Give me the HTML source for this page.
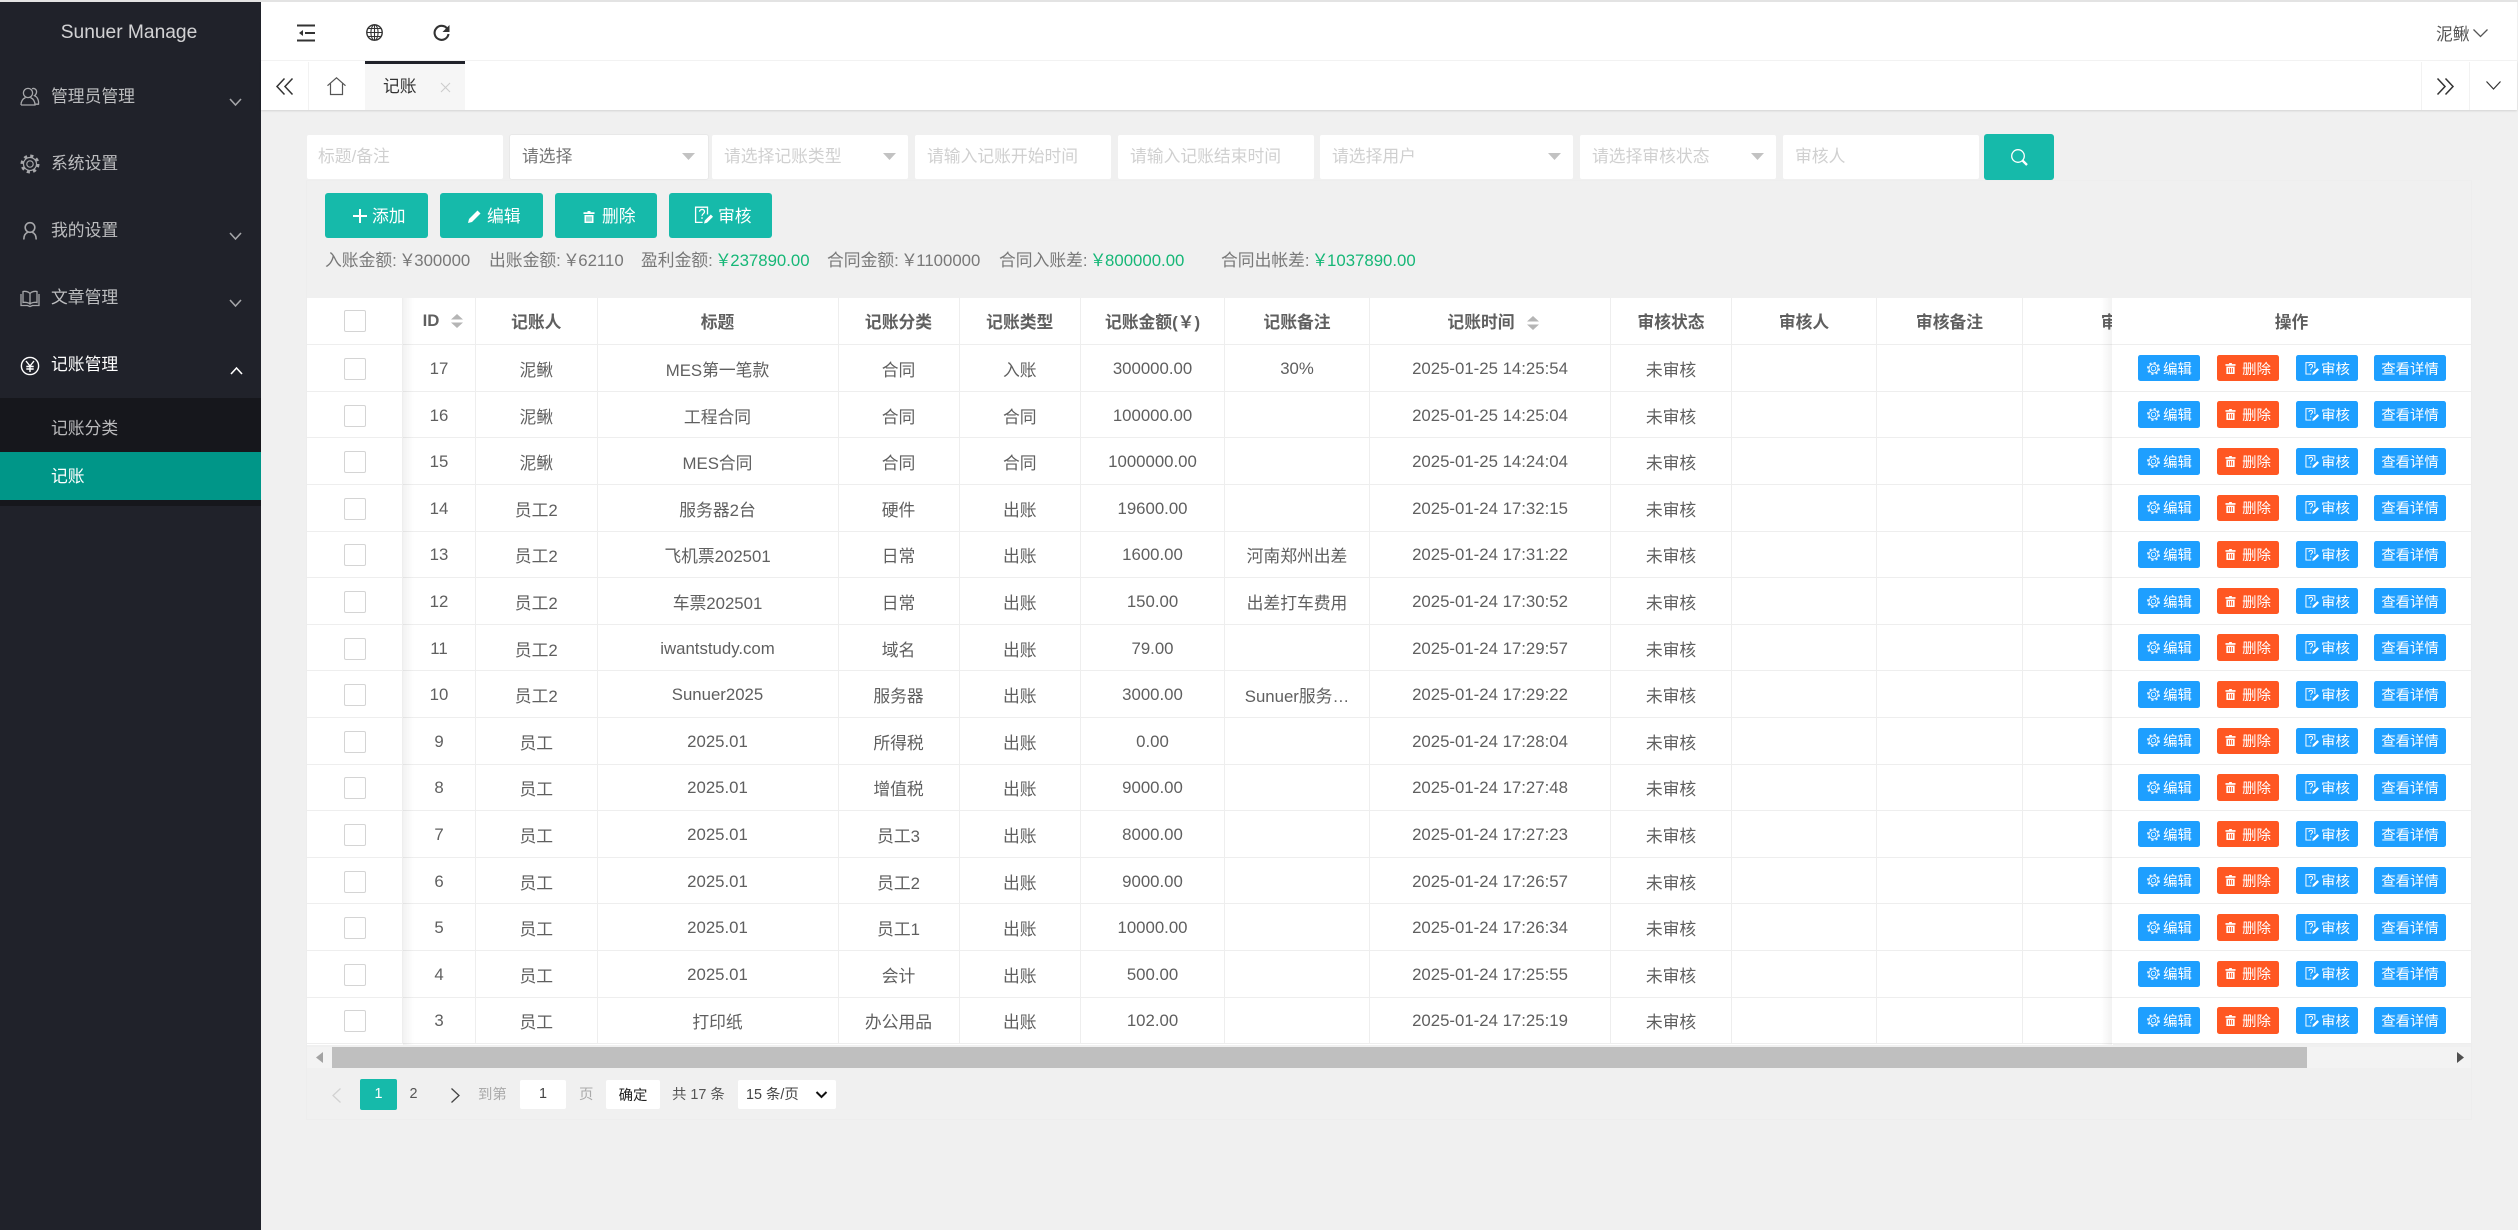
<!DOCTYPE html>
<html lang="zh-CN">
<head>
<meta charset="utf-8">
<title>Sunuer Manage</title>
<style>
*{box-sizing:border-box;margin:0;padding:0}
html,body{width:2518px;height:1230px;overflow:hidden;background:#f0f0f0;font-family:"Liberation Sans","Noto Sans CJK SC",sans-serif;font-size:16.8px;color:#5f5f5f}
.a{position:absolute}
svg{display:block;overflow:visible}
#top{left:0;top:0;width:2518px;height:2px;background:#e3e3e3}
#side{left:0;top:2px;width:261px;height:1228px;background:#20222a;color:rgba(255,255,255,.7)}
#logo{left:0;top:0;width:258px;height:59px;line-height:61px;text-align:center;font-size:19.2px;color:rgba(255,255,255,.8)}
.nav{left:51px;line-height:24px;height:24px;white-space:nowrap;margin-top:1.5px}
.nic{left:20px;width:20px;height:20px;fill:none;stroke:#a6a7aa;stroke-width:1.3}
.car{left:229px;width:13px;height:8px;fill:none;stroke:#a5a6a9;stroke-width:1.6}
#sub{left:0;top:396px;width:261px;height:108px;background:#16171c}
#cur{left:0;top:450px;width:261px;height:48px;background:#009688}
#hd{left:261px;top:2px;width:2256px;height:59px;background:#fff;border-bottom:1px solid #f4f4f4}
#tabs{left:261px;top:61px;width:2256px;height:49px;background:#fff;box-shadow:0 1px 2px rgba(0,0,0,.12)}
#tab{left:365px;top:61px;width:100px;height:49px;background:#f6f6f6;border-top:3px solid #20222a;color:#333;line-height:45px;padding-left:18px}
.vl{width:1px;background:#f2f2f2}
.ic{stroke:#333;fill:none}
.f{left:0;height:44px;top:135px;background:#fff;line-height:44px;color:#d0d0d0;border-radius:2px;white-space:nowrap;overflow:hidden}
.tri{top:153px;width:13px;height:7px}
.btn{top:193px;height:45px;background:#16baaa;border-radius:3px;color:#fff;line-height:47px;white-space:nowrap}
.st{top:249px;height:24px;line-height:24px;white-space:nowrap;color:#787878}
.st b{font-weight:400;color:#16b777}
.y{font-style:normal;margin-left:-2.5px;margin-right:-1.5px}
#wrap{left:306px;top:180px;width:2166px;height:940px;border:1px solid #ededed;border-top-color:#eeeeee}
#tbw{left:307px;top:298px;width:1806px;height:747px;overflow:hidden;background:#fff}
table{border-collapse:separate;border-spacing:0;table-layout:fixed}
#t{width:1940px}
tr{height:46.6px}
#t tr:first-child,#op tr:first-child{height:47.3px}
th,td{border-right:1px solid #eee;border-bottom:1px solid #eee;text-align:center;padding:0;vertical-align:middle;white-space:nowrap;overflow:hidden;background:#fff;font-weight:400}
#t td{padding-top:2px}
th{font-weight:700;color:#5f5f5f;font-size:16.8px}
.cb{display:block;width:22px;height:22px;border:1px solid #d4d4d4;border-radius:2px;margin:0 auto;background:#fff}
.so{display:inline-block;vertical-align:-2px;margin-left:12px;width:12px;height:14px}
#s1{left:403px;top:298px;width:11px;height:747px;background:linear-gradient(90deg,rgba(0,0,0,.05),rgba(0,0,0,0))}
#s2{left:2101px;top:298px;width:11px;height:747px;background:linear-gradient(270deg,rgba(0,0,0,.05),rgba(0,0,0,0))}
#op{left:2112px;top:298px;width:359px}
#op td,#op th{border-right:0}
.bs{display:flex;padding-left:26px;align-items:center}
.b{display:flex;align-items:center;justify-content:center;width:62px;height:26.6px;margin-right:17px;padding-top:3px;background:#1e9fff;color:#fff;border-radius:2.4px;font-size:14.4px;line-height:26px;white-space:nowrap}
.b:nth-child(3){margin-right:16px}
.b:last-child{width:72px;margin:0}
.o{background:#ff5722}
.b svg{width:15px;height:15px;margin-right:2px;margin-top:-3px;flex:none;stroke:#fff;fill:none;stroke-width:1.2}
.b.o svg{width:11px;height:11px;margin-right:6px;fill:#fff;stroke:none}
#sc{left:307px;top:1047px;width:2164px;height:21px;background:#f3f3f3}
#th{left:25px;top:0;width:1975px;height:21px;background:#bfbfbf}
.p{top:1079px;height:31px;line-height:31px;font-size:14.4px;white-space:nowrap}
.wb{background:#fff;text-align:center;border-radius:2px;top:1080px;height:29px;line-height:29px}
</style>
</head>
<body>
<svg width="0" height="0" style="position:absolute">
<symbol id="g" viewBox="0 0 20 20"><circle cx="10" cy="10" r="7.2" fill="none" stroke="currentColor" stroke-width="3" stroke-dasharray="2.8 2.85" opacity=".85"/><circle cx="10" cy="10" r="6" fill="#1e9fff" stroke="currentColor" stroke-width="1.1"/><circle cx="10" cy="10" r="3" fill="none" stroke="currentColor" stroke-width="1.1"/></symbol>
<symbol id="q" viewBox="0 0 20 20"><path d="M14.5 9.5V2.2H2.6v15.2h7" fill="none" stroke="currentColor" stroke-width="1.3"/><path d="M6.5 6.7c.3-3 5-3 5 0 0 2-2.5 2-2.5 4.2M9 12.3v1.6" fill="none" stroke="currentColor" stroke-width="1.3"/><path d="M11 18.5l.8-3 6-6 2.2 2.2-6 6z" fill="currentColor" stroke="none"/></symbol>
<symbol id="d" viewBox="0 0 12 12"><path d="M4.5 0h3v1.2h4V3H.5V1.2h4zM1.5 4h9v8h-9zM3.5 5.5v5h1v-5zm2 0v5h1v-5zm2 0v5h1v-5z" fill-rule="evenodd"/></symbol>
<symbol id="sort" viewBox="0 0 12 14"><path d="M6 0l6 5.5H0zM6 14l6-5.5H0z" fill="#b5b5b5"/></symbol>
</svg>

<div class="a" id="top"></div>

<div class="a" id="side">
  <div class="a" id="logo">Sunuer Manage</div>
  <svg class="a nic" style="top:85px" viewBox="0 0 20 20"><circle cx="8" cy="6" r="4.6"/><path d="M1 18c0-4.5 2.5-6.5 4.5-7.5M10.5 10.5c2 1 4.500 3 4.500 7.500H1M12 1.800c2-1 5 .5 4.500 3.700-.2 1.500-1 2.500-2 3.200 2.500 1 4.500 4 4 8.500h-3"/></svg>
  <div class="a nav" style="top:81px">管理员管理</div>
  <svg class="a car" style="top:96px" viewBox="0 0 13 8"><path d="M1 1l5.500 6L12 1"/></svg>

  <svg class="a nic" style="top:152px;stroke-width:1.2" viewBox="0 0 20 20"><circle cx="10" cy="10" r="8" stroke-width="3" stroke-dasharray="3.100 3.180"/><circle cx="10" cy="10" r="6.500" fill="#20222a" stroke-width="1.200"/><circle cx="10" cy="10" r="3.200"/></svg>
  <div class="a nav" style="top:148px">系统设置</div>

  <svg class="a nic" style="top:219px;stroke-width:1.6" viewBox="0 0 20 20"><circle cx="10" cy="6.500" r="4.800"/><path d="M3.800 18.500c0-4.500 2-6.500 4-7.300M16.200 18.500c0-4.500-2-6.500-4-7.300"/></svg>
  <div class="a nav" style="top:215px">我的设置</div>
  <svg class="a car" style="top:230px" viewBox="0 0 13 8"><path d="M1 1l5.500 6L12 1"/></svg>

  <svg class="a nic" style="top:286px" viewBox="0 0 20 20"><path d="M10 5.500C8.500 3.500 5 3 3 3.500v11c2-.5 5.500 0 7 1.500 1.500-1.500 5-2 7-1.500v-11c-2-.5-5.500 0-7 2zM10 5.500V16M1 6v11.500h6.500L10 18.500l2.500-1H19V6"/></svg>
  <div class="a nav" style="top:282px">文章管理</div>
  <svg class="a car" style="top:297px" viewBox="0 0 13 8"><path d="M1 1l5.500 6L12 1"/></svg>

  <svg class="a nic" style="top:354px;stroke:#fff;stroke-width:1.400" viewBox="0 0 20 20"><circle cx="10" cy="10" r="8.600"/><path d="M6 5l4 5 4-5M10 10v6M6.300 10.500h7.400M6.300 13h7.400"/></svg>
  <div class="a nav" style="top:349px;color:#fff">记账管理</div>
  <svg class="a car" style="top:365px;left:230px;stroke:#fff" viewBox="0 0 13 8"><path d="M1 7l5.500-6L12 7"/></svg>

  <div class="a" id="sub"></div>
  <div class="a nav" style="top:413px">记账分类</div>
  <div class="a" id="cur"></div>
  <div class="a nav" style="top:461px;color:#fff">记账</div>
</div>

<div class="a" id="hd"></div>
<svg class="a ic" style="left:297px;top:24px;stroke-width:2" width="19" height="18" viewBox="0 0 19 18"><path d="M0 1.500h18M8 9h10M0 16.500h18"/><path d="M2 9l4-3v6z" fill="#333" stroke="none"/></svg>
<svg class="a ic" style="left:366px;top:24px;stroke-width:1.100" width="17" height="17" viewBox="0 0 17 17"><circle cx="8.500" cy="8.500" r="7.700" stroke-width="1.400"/><ellipse cx="8.500" cy="8.500" rx="3.600" ry="7.700"/><path d="M8.500 .8v15.400M.8 8.500h15.400M2 4.500h13M2 12.500h13"/></svg>
<svg class="a ic" style="left:433px;top:25px;stroke-width:2.100" width="17" height="17" viewBox="0 0 17 17"><path d="M14.300 3.800A7 7 0 1 0 15.500 9"/><path d="M16.500 0v7h-7z" fill="#333" stroke="none"/></svg>
<div class="a" style="left:2436px;top:22.500px;height:24px;line-height:24px;color:#555">泥鳅</div>
<svg class="a" style="left:2473px;top:29px;stroke:#555;fill:none;stroke-width:1.300" width="15" height="8" viewBox="0 0 15 8"><path d="M.5.500l7 7 7-7"/></svg>

<div class="a" id="tabs"></div>
<div class="a vl" style="left:308px;top:62px;height:48px"></div>
<div class="a vl" style="left:2421px;top:62px;height:48px"></div>
<div class="a vl" style="left:2469px;top:62px;height:48px"></div>
<svg class="a ic" style="left:276px;top:78px;stroke-width:1.500" width="17" height="17" viewBox="0 0 17 17"><path d="M8.500.5L1 8.500l7.500 8M16.500.5L9 8.500l7.500 8"/></svg>
<svg class="a" style="left:327px;top:77px;fill:none;stroke:#555;stroke-width:1.200" width="19" height="18" viewBox="0 0 19 18"><path d="M.5 8.700L9.500.8l9 7.900M3.500 6.500v11h12v-11"/></svg>
<div class="a" id="tab">记账</div>
<svg class="a" style="left:441px;top:83px;stroke:#ccc;stroke-width:1.100" width="9" height="9" viewBox="0 0 9 9"><path d="M0 0l9 9M9 0l-9 9"/></svg>
<svg class="a" style="left:2437px;top:78px;fill:none;stroke:#333;stroke-width:1.500" width="17" height="17" viewBox="0 0 17 17"><path d="M.5.500L8 8.500l-7.500 8M8.500.5L16 8.500l-7.500 8"/></svg>
<svg class="a" style="left:2486px;top:81px;fill:none;stroke:#333;stroke-width:1.200" width="15" height="9" viewBox="0 0 15 9"><path d="M.5.500l7 7.500 7-7.500"/></svg>

<div class="a" id="wrap"></div>

<div class="a f" style="left:307px;width:196px;padding-left:11px">标题/备注</div>
<div class="a f" style="left:510px;width:198px;padding-left:12px;color:#757575;box-shadow:0 0 0 1px #e8e8e8">请选择</div>
<svg class="a tri" style="left:682px" viewBox="0 0 13 7"><path d="M0 0h13L6.500 7z" fill="#c2c2c2"/></svg>
<div class="a f" style="left:712px;width:196px;padding-left:12px">请选择记账类型</div>
<svg class="a tri" style="left:883px" viewBox="0 0 13 7"><path d="M0 0h13L6.500 7z" fill="#c2c2c2"/></svg>
<div class="a f" style="left:915px;width:196px;padding-left:12px">请输入记账开始时间</div>
<div class="a f" style="left:1118px;width:196px;padding-left:12px">请输入记账结束时间</div>
<div class="a f" style="left:1320px;width:253px;padding-left:12px">请选择用户</div>
<svg class="a tri" style="left:1548px" viewBox="0 0 13 7"><path d="M0 0h13L6.500 7z" fill="#c2c2c2"/></svg>
<div class="a f" style="left:1580px;width:196px;padding-left:12px">请选择审核状态</div>
<svg class="a tri" style="left:1751px" viewBox="0 0 13 7"><path d="M0 0h13L6.500 7z" fill="#c2c2c2"/></svg>
<div class="a f" style="left:1783px;width:196px;padding-left:12px">审核人</div>
<div class="a" style="left:1984px;top:134px;width:70px;height:46px;background:#16baaa;border-radius:3px"></div>
<svg class="a" style="left:2011px;top:149px;fill:none;stroke:#fff;stroke-width:1.300" width="17" height="17" viewBox="0 0 17 17"><circle cx="7" cy="7" r="6.300"/><path d="M11.500 11.500l4.500 4.500" stroke-width="2.300"/></svg>

<div class="a btn" style="left:325px;width:103px;padding-left:47px">添加</div>
<svg class="a" style="left:353px;top:209px;stroke:#fff;stroke-width:2" width="14" height="14" viewBox="0 0 14 14"><path d="M7 0v14M0 7h14"/></svg>
<div class="a btn" style="left:440px;width:103px;padding-left:47px">编辑</div>
<svg class="a" style="left:468px;top:210px" width="13" height="13" viewBox="0 0 13 13"><path d="M0 13l1-4L9.500.500l3 3L4 12z" fill="#fff"/></svg>
<div class="a btn" style="left:555px;width:102px;padding-left:47px">删除</div>
<svg class="a" style="left:583px;top:211px;fill:#fff" width="12" height="12" viewBox="0 0 12 12"><use href="#d"/></svg>
<div class="a btn" style="left:669px;width:103px;padding-left:49px">审核</div>
<svg class="a" style="left:693px;top:205px;color:#fff" width="20" height="20" viewBox="0 0 20 20"><use href="#q"/></svg>

<div class="a st" style="left:325px">入账金额: <i class="y">￥</i>300000</div>
<div class="a st" style="left:489px">出账金额: <i class="y">￥</i>62110</div>
<div class="a st" style="left:641px">盈利金额: <b><i class="y">￥</i>237890.00</b></div>
<div class="a st" style="left:827px">合同金额: <i class="y">￥</i>1100000</div>
<div class="a st" style="left:999px">合同入账差: <b><i class="y">￥</i>800000.00</b></div>
<div class="a st" style="left:1221px">合同出帐差: <b><i class="y">￥</i>1037890.00</b></div>

<div class="a" id="tbw">
<table id="t">
<colgroup><col style="width:96px"><col style="width:73px"><col style="width:121.500px"><col style="width:241px"><col style="width:121px"><col style="width:121.500px"><col style="width:144px"><col style="width:145px"><col style="width:241px"><col style="width:121px"><col style="width:145px"><col style="width:146px"><col style="width:224px"></colgroup>
<tr><th><i class="cb"></i></th><th style="padding-left:8px">ID<svg class="so"><use href="#sort"/></svg></th><th>记账人</th><th>标题</th><th>记账分类</th><th>记账类型</th><th>记账金额(￥)</th><th>记账备注</th><th style="padding-left:6px">记账时间<svg class="so"><use href="#sort"/></svg></th><th>审核状态</th><th>审核人</th><th>审核备注</th><th>审核时间</th></tr>
<tr><td><i class="cb"></i></td><td>17</td><td>泥鳅</td><td>MES第一笔款</td><td>合同</td><td>入账</td><td>300000.00</td><td>30%</td><td>2025-01-25 14:25:54</td><td>未审核</td><td></td><td></td><td></td></tr>
<tr><td><i class="cb"></i></td><td>16</td><td>泥鳅</td><td>工程合同</td><td>合同</td><td>合同</td><td>100000.00</td><td></td><td>2025-01-25 14:25:04</td><td>未审核</td><td></td><td></td><td></td></tr>
<tr><td><i class="cb"></i></td><td>15</td><td>泥鳅</td><td>MES合同</td><td>合同</td><td>合同</td><td>1000000.00</td><td></td><td>2025-01-25 14:24:04</td><td>未审核</td><td></td><td></td><td></td></tr>
<tr><td><i class="cb"></i></td><td>14</td><td>员工2</td><td>服务器2台</td><td>硬件</td><td>出账</td><td>19600.00</td><td></td><td>2025-01-24 17:32:15</td><td>未审核</td><td></td><td></td><td></td></tr>
<tr><td><i class="cb"></i></td><td>13</td><td>员工2</td><td>飞机票202501</td><td>日常</td><td>出账</td><td>1600.00</td><td>河南郑州出差</td><td>2025-01-24 17:31:22</td><td>未审核</td><td></td><td></td><td></td></tr>
<tr><td><i class="cb"></i></td><td>12</td><td>员工2</td><td>车票202501</td><td>日常</td><td>出账</td><td>150.00</td><td>出差打车费用</td><td>2025-01-24 17:30:52</td><td>未审核</td><td></td><td></td><td></td></tr>
<tr><td><i class="cb"></i></td><td>11</td><td>员工2</td><td>iwantstudy.com</td><td>域名</td><td>出账</td><td>79.00</td><td></td><td>2025-01-24 17:29:57</td><td>未审核</td><td></td><td></td><td></td></tr>
<tr><td><i class="cb"></i></td><td>10</td><td>员工2</td><td>Sunuer2025</td><td>服务器</td><td>出账</td><td>3000.00</td><td>Sunuer服务…</td><td>2025-01-24 17:29:22</td><td>未审核</td><td></td><td></td><td></td></tr>
<tr><td><i class="cb"></i></td><td>9</td><td>员工</td><td>2025.01</td><td>所得税</td><td>出账</td><td>0.00</td><td></td><td>2025-01-24 17:28:04</td><td>未审核</td><td></td><td></td><td></td></tr>
<tr><td><i class="cb"></i></td><td>8</td><td>员工</td><td>2025.01</td><td>增值税</td><td>出账</td><td>9000.00</td><td></td><td>2025-01-24 17:27:48</td><td>未审核</td><td></td><td></td><td></td></tr>
<tr><td><i class="cb"></i></td><td>7</td><td>员工</td><td>2025.01</td><td>员工3</td><td>出账</td><td>8000.00</td><td></td><td>2025-01-24 17:27:23</td><td>未审核</td><td></td><td></td><td></td></tr>
<tr><td><i class="cb"></i></td><td>6</td><td>员工</td><td>2025.01</td><td>员工2</td><td>出账</td><td>9000.00</td><td></td><td>2025-01-24 17:26:57</td><td>未审核</td><td></td><td></td><td></td></tr>
<tr><td><i class="cb"></i></td><td>5</td><td>员工</td><td>2025.01</td><td>员工1</td><td>出账</td><td>10000.00</td><td></td><td>2025-01-24 17:26:34</td><td>未审核</td><td></td><td></td><td></td></tr>
<tr><td><i class="cb"></i></td><td>4</td><td>员工</td><td>2025.01</td><td>会计</td><td>出账</td><td>500.00</td><td></td><td>2025-01-24 17:25:55</td><td>未审核</td><td></td><td></td><td></td></tr>
<tr><td><i class="cb"></i></td><td>3</td><td>员工</td><td>打印纸</td><td>办公用品</td><td>出账</td><td>102.00</td><td></td><td>2025-01-24 17:25:19</td><td>未审核</td><td></td><td></td><td></td></tr>
</table>
</div>
<div class="a" id="s1"></div>
<div class="a" id="s2"></div>

<table class="a" id="op">
<tr><th>操作</th></tr>
<tr><td><div class="bs"><span class="b"><svg><use href="#g"/></svg>编辑</span><span class="b o"><svg><use href="#d"/></svg>删除</span><span class="b"><svg><use href="#q"/></svg>审核</span><span class="b">查看详情</span></div></td></tr>
<tr><td><div class="bs"><span class="b"><svg><use href="#g"/></svg>编辑</span><span class="b o"><svg><use href="#d"/></svg>删除</span><span class="b"><svg><use href="#q"/></svg>审核</span><span class="b">查看详情</span></div></td></tr>
<tr><td><div class="bs"><span class="b"><svg><use href="#g"/></svg>编辑</span><span class="b o"><svg><use href="#d"/></svg>删除</span><span class="b"><svg><use href="#q"/></svg>审核</span><span class="b">查看详情</span></div></td></tr>
<tr><td><div class="bs"><span class="b"><svg><use href="#g"/></svg>编辑</span><span class="b o"><svg><use href="#d"/></svg>删除</span><span class="b"><svg><use href="#q"/></svg>审核</span><span class="b">查看详情</span></div></td></tr>
<tr><td><div class="bs"><span class="b"><svg><use href="#g"/></svg>编辑</span><span class="b o"><svg><use href="#d"/></svg>删除</span><span class="b"><svg><use href="#q"/></svg>审核</span><span class="b">查看详情</span></div></td></tr>
<tr><td><div class="bs"><span class="b"><svg><use href="#g"/></svg>编辑</span><span class="b o"><svg><use href="#d"/></svg>删除</span><span class="b"><svg><use href="#q"/></svg>审核</span><span class="b">查看详情</span></div></td></tr>
<tr><td><div class="bs"><span class="b"><svg><use href="#g"/></svg>编辑</span><span class="b o"><svg><use href="#d"/></svg>删除</span><span class="b"><svg><use href="#q"/></svg>审核</span><span class="b">查看详情</span></div></td></tr>
<tr><td><div class="bs"><span class="b"><svg><use href="#g"/></svg>编辑</span><span class="b o"><svg><use href="#d"/></svg>删除</span><span class="b"><svg><use href="#q"/></svg>审核</span><span class="b">查看详情</span></div></td></tr>
<tr><td><div class="bs"><span class="b"><svg><use href="#g"/></svg>编辑</span><span class="b o"><svg><use href="#d"/></svg>删除</span><span class="b"><svg><use href="#q"/></svg>审核</span><span class="b">查看详情</span></div></td></tr>
<tr><td><div class="bs"><span class="b"><svg><use href="#g"/></svg>编辑</span><span class="b o"><svg><use href="#d"/></svg>删除</span><span class="b"><svg><use href="#q"/></svg>审核</span><span class="b">查看详情</span></div></td></tr>
<tr><td><div class="bs"><span class="b"><svg><use href="#g"/></svg>编辑</span><span class="b o"><svg><use href="#d"/></svg>删除</span><span class="b"><svg><use href="#q"/></svg>审核</span><span class="b">查看详情</span></div></td></tr>
<tr><td><div class="bs"><span class="b"><svg><use href="#g"/></svg>编辑</span><span class="b o"><svg><use href="#d"/></svg>删除</span><span class="b"><svg><use href="#q"/></svg>审核</span><span class="b">查看详情</span></div></td></tr>
<tr><td><div class="bs"><span class="b"><svg><use href="#g"/></svg>编辑</span><span class="b o"><svg><use href="#d"/></svg>删除</span><span class="b"><svg><use href="#q"/></svg>审核</span><span class="b">查看详情</span></div></td></tr>
<tr><td><div class="bs"><span class="b"><svg><use href="#g"/></svg>编辑</span><span class="b o"><svg><use href="#d"/></svg>删除</span><span class="b"><svg><use href="#q"/></svg>审核</span><span class="b">查看详情</span></div></td></tr>
<tr><td><div class="bs"><span class="b"><svg><use href="#g"/></svg>编辑</span><span class="b o"><svg><use href="#d"/></svg>删除</span><span class="b"><svg><use href="#q"/></svg>审核</span><span class="b">查看详情</span></div></td></tr>
</table>

<div class="a" id="sc">
  <div class="a" id="th"></div>
  <svg class="a" style="left:9px;top:5px" width="7" height="11" viewBox="0 0 7 11"><path d="M7 0v11L0 5.500z" fill="#a3a3a3"/></svg>
  <svg class="a" style="left:2150px;top:5px" width="7" height="11" viewBox="0 0 7 11"><path d="M0 0v11l7-5.500z" fill="#505050"/></svg>
</div>

<svg class="a" style="left:332px;top:1088px;fill:none;stroke:#d2d2d2;stroke-width:1.300" width="9" height="15" viewBox="0 0 9 15"><path d="M8.500.5L1 7.500l7.500 7"/></svg>
<div class="a p" style="left:360px;width:37px;background:#16baaa;color:#fff;text-align:center;border-radius:2px">1</div>
<div class="a p" style="left:405px;width:17px;color:#555;text-align:center">2</div>
<svg class="a" style="left:451px;top:1088px;fill:none;stroke:#444;stroke-width:1.300" width="9" height="15" viewBox="0 0 9 15"><path d="M.5.500L8 7.500l-7.500 7"/></svg>
<div class="a p" style="left:478px;color:#aaa;line-height:33px">到第</div>
<div class="a p wb" style="left:520px;width:46px;color:#444">1</div>
<div class="a p" style="left:579px;color:#aaa;line-height:33px">页</div>
<div class="a p wb" style="left:606px;width:54px;color:#222;line-height:32px">确定</div>
<div class="a p" style="left:672px;color:#555;line-height:33px">共 17 条</div>
<div class="a p wb" style="left:738px;width:98px;color:#444;text-align:left;padding-left:8px;line-height:31px">15 条/页</div>
<svg class="a" style="left:816px;top:1091px;fill:none;stroke:#111;stroke-width:2" width="11" height="8" viewBox="0 0 11 8"><path d="M.5 1l5 5 5-5"/></svg>
</body>
</html>
